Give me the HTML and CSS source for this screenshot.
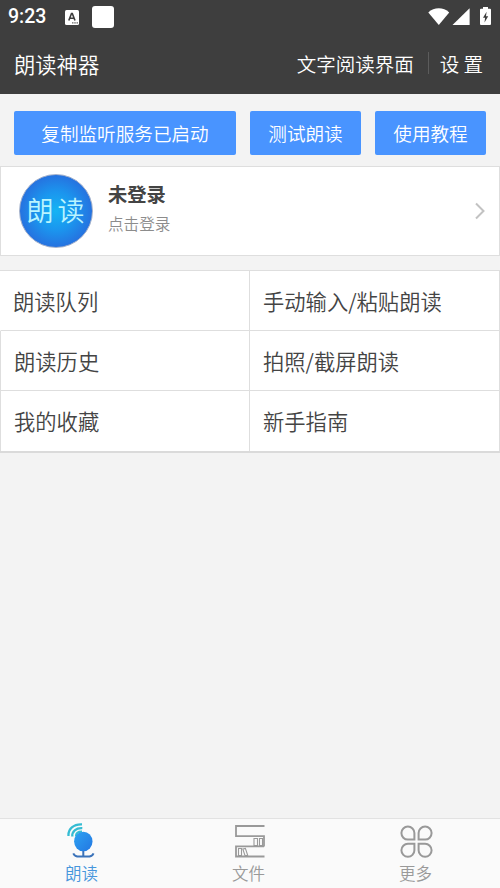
FILE: index.html
```html
<!DOCTYPE html>
<html lang="zh-CN">
<head>
<meta charset="utf-8">
<title>朗读神器</title>
<link rel="stylesheet" href="styles.css">
</head>
<body>
<div class="app">
  <header class="header">
    <div class="status">
      <span class="clock">9:23</span>
      <svg class="status-a" width="14" height="15" viewBox="0 0 14 15"><rect width="14" height="15" rx="1.5" fill="#fff"/><path d="M3.800 10.500 6.500 3.500h.8l2.700 7M4.800 8.200h4.200" fill="none" stroke="#3e3e3e" stroke-width="1.600"/><path d="M7.200 12.900h1.200M9.400 12.900h1.200M11.600 12.900h1.200" stroke="#3e3e3e" stroke-width="1.200"/></svg>
      <span class="status-box"></span>
      <svg class="status-right" width="64" height="20" viewBox="0 0 64 20"><path d="M.3 5.400C6-.2 15.500-.2 21.200 5.400L10.800 18z" fill="#fff"/><path d="M24.500 18 41.600 1.200V18z" fill="#fff"/><path d="M53 1.800h2V0h5v1.800h2a1 1 0 0 1 1 1V17a1 1 0 0 1-1 1h-9a1 1 0 0 1-1-1V2.800a1 1 0 0 1 1-1z" fill="#fff"/><path d="M58.600 4.800 55 10.700h2.100l-.6 4.700 3.700-6.200H58z" fill="#3e3e3e"/></svg>
    </div>
    <div class="titlebar">
      <h1 class="title">朗读神器</h1>
      <span class="nav-link">文字阅读界面</span>
      <span class="nav-divider"></span>
      <span class="nav-link">设 置</span>
    </div>
  </header>

  <div class="actions">
    <button class="btn btn-wide">复制监听服务已启动</button>
    <button class="btn">测试朗读</button>
    <button class="btn">使用教程</button>
  </div>

  <section class="account">
    <div class="avatar">朗读</div>
    <div class="account-text">
      <div class="account-name">未登录</div>
      <div class="account-hint">点击登录</div>
    </div>
    <svg class="chevron" width="10" height="18" viewBox="0 0 10 18"><path d="M1 1.500 8.500 9 1 16.500" fill="none" stroke="#c2c2c2" stroke-width="2"/></svg>
  </section>

  <section class="menu">
    <div class="cell cell-first">朗读队列</div><div class="cell">手动输入/粘贴朗读</div>
    <div class="cell">朗读历史</div><div class="cell">拍照/截屏朗读</div>
    <div class="cell">我的收藏</div><div class="cell">新手指南</div>
  </section>

  <nav class="tabs">
    <div class="tab tab-active">
      <svg width="34" height="38" viewBox="0 0 34 38">
        <defs>
          <linearGradient id="mic" x1="0" y1="0" x2="1" y2="1"><stop offset="0" stop-color="#2da2f2"/><stop offset="1" stop-color="#2377e2"/></linearGradient>
        </defs>
        <g fill="none" stroke="#35bcd3" stroke-width="2.300"><path d="M3.500 13C3 6 8.500 .9 17 1.300"/><path d="M7.300 13.500C6.800 8.500 11 4.800 17.300 5.200" /><path d="M11 13.500c0-3 2.500-4.800 6-4.800"/></g>
        <ellipse cx="18.300" cy="18.500" rx="9.200" ry="9.800" fill="url(#mic)"/>
        <path d="M18.300 28v5.800M8.300 30.300c1.200 2.700 3.500 3.300 6 3.300h8c3 0 5.200-.6 6.200-3.300" fill="none" stroke="#3a72b9" stroke-width="2"/>
      </svg>
      <span>朗读</span>
    </div>
    <div class="tab">
      <svg width="34" height="38" viewBox="0 0 34 38" fill="none" stroke="#999">
        <path d="M32.500 3H4v10.200h28v10.300M32.500 33.500H4V23.300h28" stroke-width="1.800"/>
        <path d="M22 15.500h3.500v7H22zM27.500 15.500h3v7h-3zM6.500 25.500h3v7h-3zM10.800 26l2.600-.6 2.300 7-2.600.5z" stroke-width="1.100"/>
      </svg>
      <span>文件</span>
    </div>
    <div class="tab">
      <svg width="34" height="38" viewBox="0 0 34 38" fill="none" stroke="#999" stroke-width="2">
        <path d="M15.400 16.600H8.900A6.500 6.500 0 1 1 15.400 10.100z"/>
        <path d="M19.600 16.600H26.100A6.500 6.500 0 1 0 19.600 10.100z"/>
        <path d="M15.400 20.800H8.900A6.500 6.500 0 1 0 15.400 27.300z"/>
        <path d="M19.600 20.800H26.100A6.500 6.500 0 1 1 19.600 27.300z"/>
      </svg>
      <span>更多</span>
    </div>
  </nav>
</div>
</body>
</html>
```
FILE: styles.css
```css
* { box-sizing: border-box; }
body {
  margin: 0;
  font-family: "Noto Sans CJK SC", sans-serif;
  font-weight: 350;
  color: #444;
}
.app {
  display: flex;
  flex-direction: column;
  width: 500px;
  height: 888px;
  overflow: hidden;
  background: #f3f3f3;
}
.header {
  height: 94px;
  background: #3e3e3e;
  color: #fff;
}
.status {
  display: flex;
  align-items: center;
  height: 34px;
  padding: 0 8px;
}
.clock {
  width: 57px;
  font: 500 19.500px/34px Roboto, sans-serif;
}
.status-box {
  width: 22px;
  height: 22px;
  margin-left: 13px;
  border-radius: 3px;
  background: #fff;
}
.status-right { margin: 0 0 0 auto; }
.titlebar {
  display: flex;
  align-items: center;
  height: 58px;
  padding: 0 17px 0 14px;
}
.title {
  margin: 0 auto 0 0;
  font-size: 21.300px;
  font-weight: 350;
}
.nav-link {
  font-size: 19.500px;
  white-space: nowrap;
}
.nav-divider {
  width: 1px;
  height: 22px;
  margin: 0 11px 0 14px;
  background: #5c5c5c;
}
.actions {
  display: flex;
  gap: 14px;
  padding: 17px 14px 11px;
}
.btn {
  width: 111px;
  height: 44px;
  padding: 0;
  border: 0;
  border-radius: 2px;
  background: #4994ff;
  color: #fff;
  font: 350 18.600px/44px "Noto Sans CJK SC", sans-serif;
}
.btn-wide { width: 222px; }
.account {
  display: flex;
  align-items: center;
  height: 90px;
  padding: 0 14px 0 18px;
  border: 1px solid #dedede;
  background: #fff;
}
.avatar {
  width: 74px;
  height: 74px;
  border: 1px solid #a3b1cb;
  border-radius: 50%;
  background: radial-gradient(circle, #14b4f4 0%, #1b95ee 38%, #2671df 72%);
  color: #b9f4ff;
  font-size: 27px;
  line-height: 69px;
  letter-spacing: 4px;
  text-indent: 3px;
  text-align: center;
  white-space: nowrap;
}
.account-text {
  flex: 1;
  margin-left: 15px;
  padding-bottom: 7px;
}
.account-name {
  height: 30px;
  font-size: 19.300px;
  font-weight: 700;
  line-height: 28px;
}
.account-hint {
  height: 26px;
  font-size: 15.600px;
  line-height: 26px;
  color: #8c8c8c;
}
.menu {
  display: grid;
  grid-template-columns: 250px 250px;
  grid-template-rows: 60px 60px 60px;
  margin-top: 14px;
  border-top: 1px solid #dedede;
  border-bottom: 2px solid #dadada;
  background: #fff;
}
.cell {
  padding-left: 13px;
  border-right: 1px solid #dedede;
  border-bottom: 1px solid #dedede;
  font-size: 21.300px;
  line-height: 59px;
}
.cell:nth-child(odd) {
  border-left: 1px solid #dedede;
}
.cell.cell-first { border-left-color: #fff; padding-left: 12px; }
.cell:nth-last-child(-n+2) { border-bottom: 0; }
.tabs {
  display: grid;
  grid-template-columns: repeat(3, 167px);
  height: 70px;
  margin: auto 0 0 -2px;
  border-top: 1px solid #e2e2e2;
  background: #fafafa;
}
.tab {
  display: flex;
  flex-direction: column;
  align-items: center;
  padding-top: 4px;
  color: #999;
  font-size: 16.500px;
  line-height: 24px;
}
.tab-active { color: #4796dc; }
```
